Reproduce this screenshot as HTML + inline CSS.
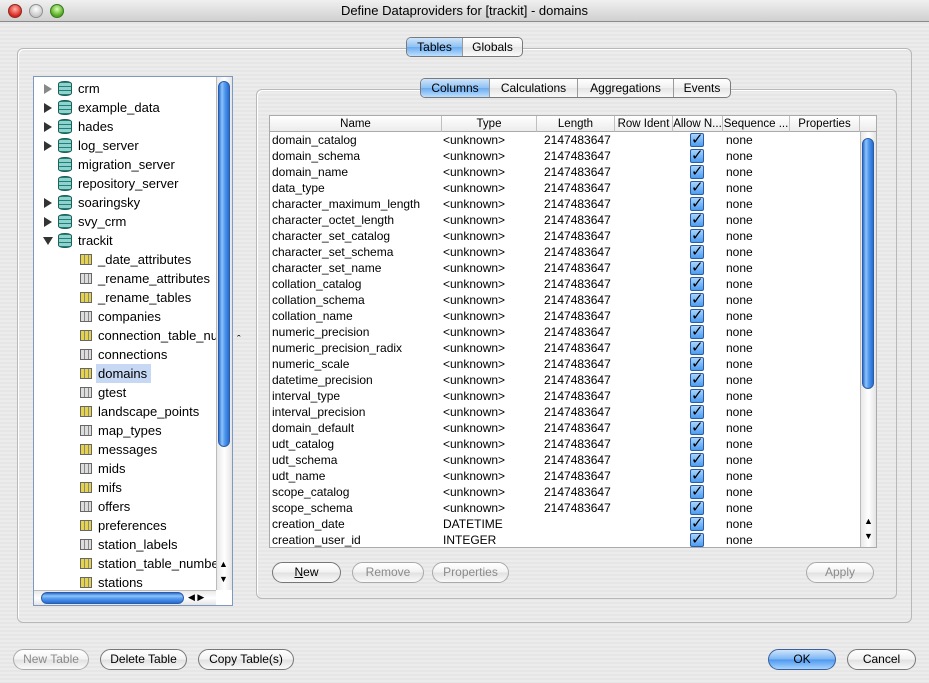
<!DOCTYPE html>
<html><head><meta charset="utf-8"><style>
*{box-sizing:border-box;margin:0;padding:0}
body{width:929px;height:683px;overflow:hidden;position:relative;font-family:"Liberation Sans","DejaVu Sans",sans-serif;color:#000;
background:repeating-linear-gradient(#ececec 0 2px,#e6e6e6 2px 4px);}
.a{position:absolute}
.title{left:0;top:0;width:929px;height:22px;background:linear-gradient(#f0f0f0,#d0d0d0);border-bottom:1px solid #8a8a8a;text-align:center;font-size:13px;line-height:22px}
.light{top:4px;width:14px;height:14px;border-radius:50%}
.panel{border:1px solid #b8b8b8;border-radius:6px;box-shadow:inset 1px 1px 0 #fff}
.seg{display:flex;border:1px solid #7a7a7a;border-radius:5px;overflow:hidden;height:20px;font-size:12px;background:linear-gradient(#fff,#f0f0f0 50%,#e4e4e4 50%,#fafafa)}
.seg div{line-height:18px;text-align:center;border-right:1px solid #9a9a9a}
.seg div:last-child{border-right:none}
.seg .on{background:linear-gradient(#cfe5fb,#8ec1f2 50%,#6aaaf0 50%,#bde0ff)}
.tree{left:33px;top:76px;width:200px;height:530px;background:#fff;border:1px solid #7f98c0}
.clip{position:absolute;left:0;top:0;width:182px;height:513px;overflow:hidden}
.row{position:absolute;height:19px;line-height:19px;font-size:13px;white-space:nowrap}
.tri{position:absolute;width:0;height:0}
.db{position:absolute;width:14px;height:15px;border-radius:6px/3px;background:repeating-linear-gradient(#1f7f7a 0 1px,#8fd3cc 1px 4px);border:1px solid #1d5f5a}
.tb{position:absolute;width:12px;height:11px;border:1px solid #666;background:repeating-linear-gradient(90deg,#e6d34a 0 3px,#888 3px 4px);}
.tb.g{background:repeating-linear-gradient(90deg,#ddd 0 3px,#888 3px 4px)}
.vs{background:linear-gradient(90deg,#e9e9e9,#fff 50%,#e4e4e4)}
.thumb{border-radius:7px;background:linear-gradient(90deg,#2f6fce,#8ec4fb 30%,#4c95ec 60%,#2a6ad0);border:1px solid #2a5da8}
.th{position:absolute;top:0;height:16px;line-height:16px;font-size:11.5px;text-align:center;border-right:1px solid #c0c0c0;background:linear-gradient(#fff,#ececec);border-bottom:1px solid #aaa;white-space:nowrap;overflow:hidden}
.td{position:absolute;height:16px;line-height:16px;font-size:12px;white-space:nowrap}
.cb{position:absolute;width:14px;height:14px;border-radius:2px;background:linear-gradient(#a9d4ff,#4e9df0);border:1px solid #2a5da8;color:#000;font-size:15px;line-height:11px;text-align:center;font-weight:bold}
.btn{position:absolute;height:21px;border:1px solid #777;border-radius:11px;background:linear-gradient(#fff,#f2f2f2 50%,#e0e0e0 50%,#fafafa);font-size:12px;line-height:19px;text-align:center}
.btn.dis{color:#8a8a8a;border-color:#aaa}
.btn.ok{background:linear-gradient(#cfe5fb,#79b4f3 50%,#4a97ee 50%,#a7d4ff);border-color:#3a5f9a}
</style></head><body>
<div class="a title">Define Dataproviders for [trackit] - domains</div>
<div class="a light" style="left:8px;background:radial-gradient(circle at 50% 35%,#ffb0a8,#d9231c 70%);border:1px solid #8a2a22"></div>
<div class="a light" style="left:29px;background:radial-gradient(circle at 50% 35%,#fff,#c8c8c8 70%);border:1px solid #909090"></div>
<div class="a light" style="left:50px;background:radial-gradient(circle at 50% 35%,#d8ffb0,#4fa61c 70%);border:1px solid #3a7a22"></div>

<div class="a panel" style="left:17px;top:48px;width:895px;height:575px"></div>
<div class="a seg" style="left:406px;top:37px;width:117px"><div class="on" style="width:56px">Tables</div><div style="flex:1">Globals</div></div>

<div class="a tree">
<div class="clip">
<div class="tri" style="left:10px;top:7px;border-left:8px solid #888;border-top:5px solid transparent;border-bottom:5px solid transparent"></div>
<div class="db" style="left:24px;top:4px"></div><div class="row" style="left:44px;top:2px">crm</div>
<div class="tri" style="left:10px;top:26px;border-left:8px solid #333;border-top:5px solid transparent;border-bottom:5px solid transparent"></div>
<div class="db" style="left:24px;top:23px"></div><div class="row" style="left:44px;top:21px">example_data</div>
<div class="tri" style="left:10px;top:45px;border-left:8px solid #333;border-top:5px solid transparent;border-bottom:5px solid transparent"></div>
<div class="db" style="left:24px;top:42px"></div><div class="row" style="left:44px;top:40px">hades</div>
<div class="tri" style="left:10px;top:64px;border-left:8px solid #333;border-top:5px solid transparent;border-bottom:5px solid transparent"></div>
<div class="db" style="left:24px;top:61px"></div><div class="row" style="left:44px;top:59px">log_server</div>
<div class="db" style="left:24px;top:80px"></div><div class="row" style="left:44px;top:78px">migration_server</div>
<div class="db" style="left:24px;top:99px"></div><div class="row" style="left:44px;top:97px">repository_server</div>
<div class="tri" style="left:10px;top:121px;border-left:8px solid #333;border-top:5px solid transparent;border-bottom:5px solid transparent"></div>
<div class="db" style="left:24px;top:118px"></div><div class="row" style="left:44px;top:116px">soaringsky</div>
<div class="tri" style="left:10px;top:140px;border-left:8px solid #333;border-top:5px solid transparent;border-bottom:5px solid transparent"></div>
<div class="db" style="left:24px;top:137px"></div><div class="row" style="left:44px;top:135px">svy_crm</div>
<div class="tri" style="left:9px;top:160px;border-top:8px solid #333;border-left:5px solid transparent;border-right:5px solid transparent"></div>
<div class="db" style="left:24px;top:156px"></div><div class="row" style="left:44px;top:154px">trackit</div>
<div style="position:absolute;left:62px;top:287px;width:55px;height:19px;background:#c6d8f4"></div>
<div class="tb" style="left:46px;top:177px"></div><div class="row" style="left:64px;top:173px">_date_attributes</div>
<div class="tb g" style="left:46px;top:196px"></div><div class="row" style="left:64px;top:192px">_rename_attributes</div>
<div class="tb" style="left:46px;top:215px"></div><div class="row" style="left:64px;top:211px">_rename_tables</div>
<div class="tb g" style="left:46px;top:234px"></div><div class="row" style="left:64px;top:230px">companies</div>
<div class="tb" style="left:46px;top:253px"></div><div class="row" style="left:64px;top:249px">connection_table_numbers</div>
<div class="tb g" style="left:46px;top:272px"></div><div class="row" style="left:64px;top:268px">connections</div>
<div class="tb" style="left:46px;top:291px"></div><div class="row" style="left:64px;top:287px">domains</div>
<div class="tb g" style="left:46px;top:310px"></div><div class="row" style="left:64px;top:306px">gtest</div>
<div class="tb" style="left:46px;top:329px"></div><div class="row" style="left:64px;top:325px">landscape_points</div>
<div class="tb g" style="left:46px;top:348px"></div><div class="row" style="left:64px;top:344px">map_types</div>
<div class="tb" style="left:46px;top:367px"></div><div class="row" style="left:64px;top:363px">messages</div>
<div class="tb g" style="left:46px;top:386px"></div><div class="row" style="left:64px;top:382px">mids</div>
<div class="tb" style="left:46px;top:405px"></div><div class="row" style="left:64px;top:401px">mifs</div>
<div class="tb g" style="left:46px;top:424px"></div><div class="row" style="left:64px;top:420px">offers</div>
<div class="tb" style="left:46px;top:443px"></div><div class="row" style="left:64px;top:439px">preferences</div>
<div class="tb g" style="left:46px;top:462px"></div><div class="row" style="left:64px;top:458px">station_labels</div>
<div class="tb" style="left:46px;top:481px"></div><div class="row" style="left:64px;top:477px">station_table_numbers</div>
<div class="tb" style="left:46px;top:500px"></div><div class="row" style="left:64px;top:496px">stations</div>
</div>
<div class="vs" style="position:absolute;left:182px;top:0;width:16px;height:513px;border-left:1px solid #bbb"></div>
<div class="thumb" style="position:absolute;left:184px;top:4px;width:12px;height:366px"></div>
<div style="position:absolute;left:185px;top:480px;font-size:9px;line-height:15px">▲<br>▼</div>
<div class="vs" style="position:absolute;left:0;top:513px;width:182px;height:15px;background:linear-gradient(#e9e9e9,#fff 50%,#e4e4e4);border-top:1px solid #bbb"></div>
<div class="thumb" style="position:absolute;left:7px;top:515px;width:143px;height:12px;background:linear-gradient(#2f6fce,#8ec4fb 30%,#4c95ec 60%,#2a6ad0)"></div>
<div style="position:absolute;left:154px;top:513px;font-size:9px;line-height:15px">◀ ▶</div>
</div>
<div class="a" style="left:237px;top:334px;font-size:11px">ˆ</div>

<div class="a panel" style="left:256px;top:89px;width:641px;height:510px"></div>
<div class="a seg" style="left:420px;top:78px;width:311px"><div class="on" style="width:69px">Columns</div><div style="width:88px">Calculations</div><div style="width:96px">Aggregations</div><div style="flex:1">Events</div></div>

<div class="a" style="left:269px;top:115px;width:608px;height:433px;background:#fff;border:1px solid #aaa;overflow:hidden">
<div class="th" style="left:0;width:172px">Name</div>
<div class="th" style="left:172px;width:95px">Type</div>
<div class="th" style="left:267px;width:78px">Length</div>
<div class="th" style="left:345px;width:58px">Row Ident</div>
<div class="th" style="left:403px;width:50px">Allow N...</div>
<div class="th" style="left:453px;width:67px">Sequence ...</div>
<div class="th" style="left:520px;width:70px">Properties</div>
<div class="th" style="left:590px;width:18px;border-right:none"></div>
<div class="vs" style="position:absolute;left:590px;top:16px;width:16px;height:416px;border-left:1px solid #bbb"></div>
<div class="thumb" style="position:absolute;left:592px;top:22px;width:12px;height:251px"></div>
<div style="position:absolute;left:594px;top:398px;font-size:9px;line-height:15px">▲<br>▼</div>
<div id="rows"></div>
</div>
<script>
var n=["domain_catalog","domain_schema","domain_name","data_type","character_maximum_length","character_octet_length","character_set_catalog","character_set_schema","character_set_name","collation_catalog","collation_schema","collation_name","numeric_precision","numeric_precision_radix","numeric_scale","datetime_precision","interval_type","interval_precision","domain_default","udt_catalog","udt_schema","udt_name","scope_catalog","scope_schema","creation_date","creation_user_id"];
var h="";for(var i=0;i<n.length;i++){var y=16+i*16;var t=i<24?"&lt;unknown&gt;":(i==24?"DATETIME":"INTEGER");var l=i<24?"2147483647":"";
h+='<div class="td" style="left:2px;top:'+y+'px">'+n[i]+'</div><div class="td" style="left:173px;top:'+y+'px">'+t+'</div><div class="td" style="left:274px;top:'+y+'px">'+l+'</div><div class="cb" style="left:420px;top:'+(y+1)+'px">✓</div><div class="td" style="left:456px;top:'+y+'px">none</div>';}
document.getElementById("rows").innerHTML=h;
</script>

<div class="btn" style="left:272px;top:562px;width:69px"><u>N</u>ew</div>
<div class="btn dis" style="left:352px;top:562px;width:72px">Remove</div>
<div class="btn dis" style="left:432px;top:562px;width:77px">Properties</div>
<div class="btn dis" style="left:806px;top:562px;width:68px">Apply</div>

<div class="btn dis" style="left:13px;top:649px;width:76px">New Table</div>
<div class="btn" style="left:100px;top:649px;width:87px">Delete Table</div>
<div class="btn" style="left:198px;top:649px;width:96px">Copy Table(s)</div>
<div class="btn ok" style="left:768px;top:649px;width:68px">OK</div>
<div class="btn" style="left:847px;top:649px;width:69px">Cancel</div>
</body></html>
